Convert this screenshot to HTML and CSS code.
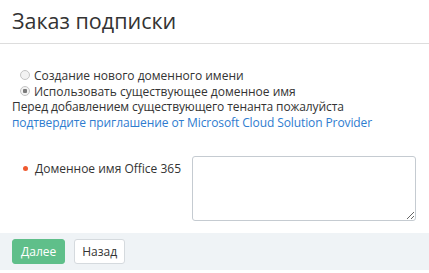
FILE: index.html
```html
<!DOCTYPE html>
<html lang="ru">
<head>
    <meta charset="UTF-8">
    <meta name="viewport" content="width=device-width, initial-scale=1.0">
    <title>Заказ подписки</title>
    <link rel="stylesheet" href="styles.css">
</head>
<body>

<header class="page-header">
    <h1>Заказ подписки</h1>
</header>

<!-- Domain choice -->
<div class="content">
    <label class="radio-row">
        <input type="radio" name="domain" value="new">
        <span>Создание нового доменного имени</span>
    </label>
    <label class="radio-row">
        <input type="radio" name="domain" value="existing" checked>
        <span>Использовать существующее доменное имя</span>
    </label>
    <p class="note">
        Перед добавлением существующего тенанта пожалуйста<br>
        <a href="#">подтвердите приглашение от Microsoft Cloud Solution Provider</a>
    </p>

    <div class="field">
        <div class="field-label"><span class="required"></span>Доменное имя Office 365</div>
        <textarea class="field-input"></textarea>
    </div>
</div>

<footer class="actions">
    <button class="btn btn-primary">Далее</button>
    <button class="btn">Назад</button>
</footer>

</body>
</html>
```

FILE: styles.css
```css
body {
    font-family: "Open Sans", Arial, sans-serif;
    font-size: 12px;
    color: #333;
    background-color: #fff;
    margin: 0;
    padding: 0;
}
.page-header {
    padding: 6px 12px 0;
    height: 37px;
    border-bottom: 1px solid #ddd;
}
.page-header h1 {
    margin: 0;
    font-size: 21.5px;
    font-weight: normal;
    line-height: 30px;
}
.content {
    padding: 23px 12px 0;
}
.radio-row {
    display: flex;
    align-items: center;
    height: 16px;
    padding-left: 8px;
}
.radio-row input {
    appearance: none;
    width: 10px;
    height: 10px;
    margin: 0 4px 0 0;
    border: 1px solid #c4c4c4;
    border-radius: 50%;
    background-color: #f2f2f2;
    box-sizing: border-box;
}
.radio-row input:checked {
    background: radial-gradient(circle, #7a7a7a 0 2px, #f2f2f2 2.5px);
}
.note {
    margin: 0;
    line-height: 16px;
    letter-spacing: -0.1px;
}
.note a {
    color: #2e7ccf;
    text-decoration: none;
}
.field {
    display: flex;
    justify-content: space-between;
    margin-top: 25px;
}
.field-label {
    display: flex;
    align-items: center;
    height: 24px;
    padding-left: 11px;
}
.required {
    width: 5px;
    height: 5px;
    border-radius: 50%;
    background-color: #ef5a30;
    margin-right: 7px;
}
.field-input {
    width: 224px;
    height: 65px;
    box-sizing: border-box;
    margin-right: 1px;
    border: 1px solid #c5cbd1;
    border-radius: 3px;
    resize: vertical;
}
.actions {
    margin-top: 12px;
    background-color: #eff3f6;
    padding: 6px 12px;
    display: flex;
    gap: 9px;
}
.btn {
    font-family: "Open Sans", Arial, sans-serif;
    font-size: 12px;
    height: 25px;
    padding: 0 7px;
    background-color: #fff;
    color: #333;
    border: 1px solid #d5dade;
    border-radius: 3px;
}
.btn-primary {
    padding: 0 8px;
    background-color: #5fbf8a;
    border-color: #5fbf8a;
    color: #fff;
}
```
